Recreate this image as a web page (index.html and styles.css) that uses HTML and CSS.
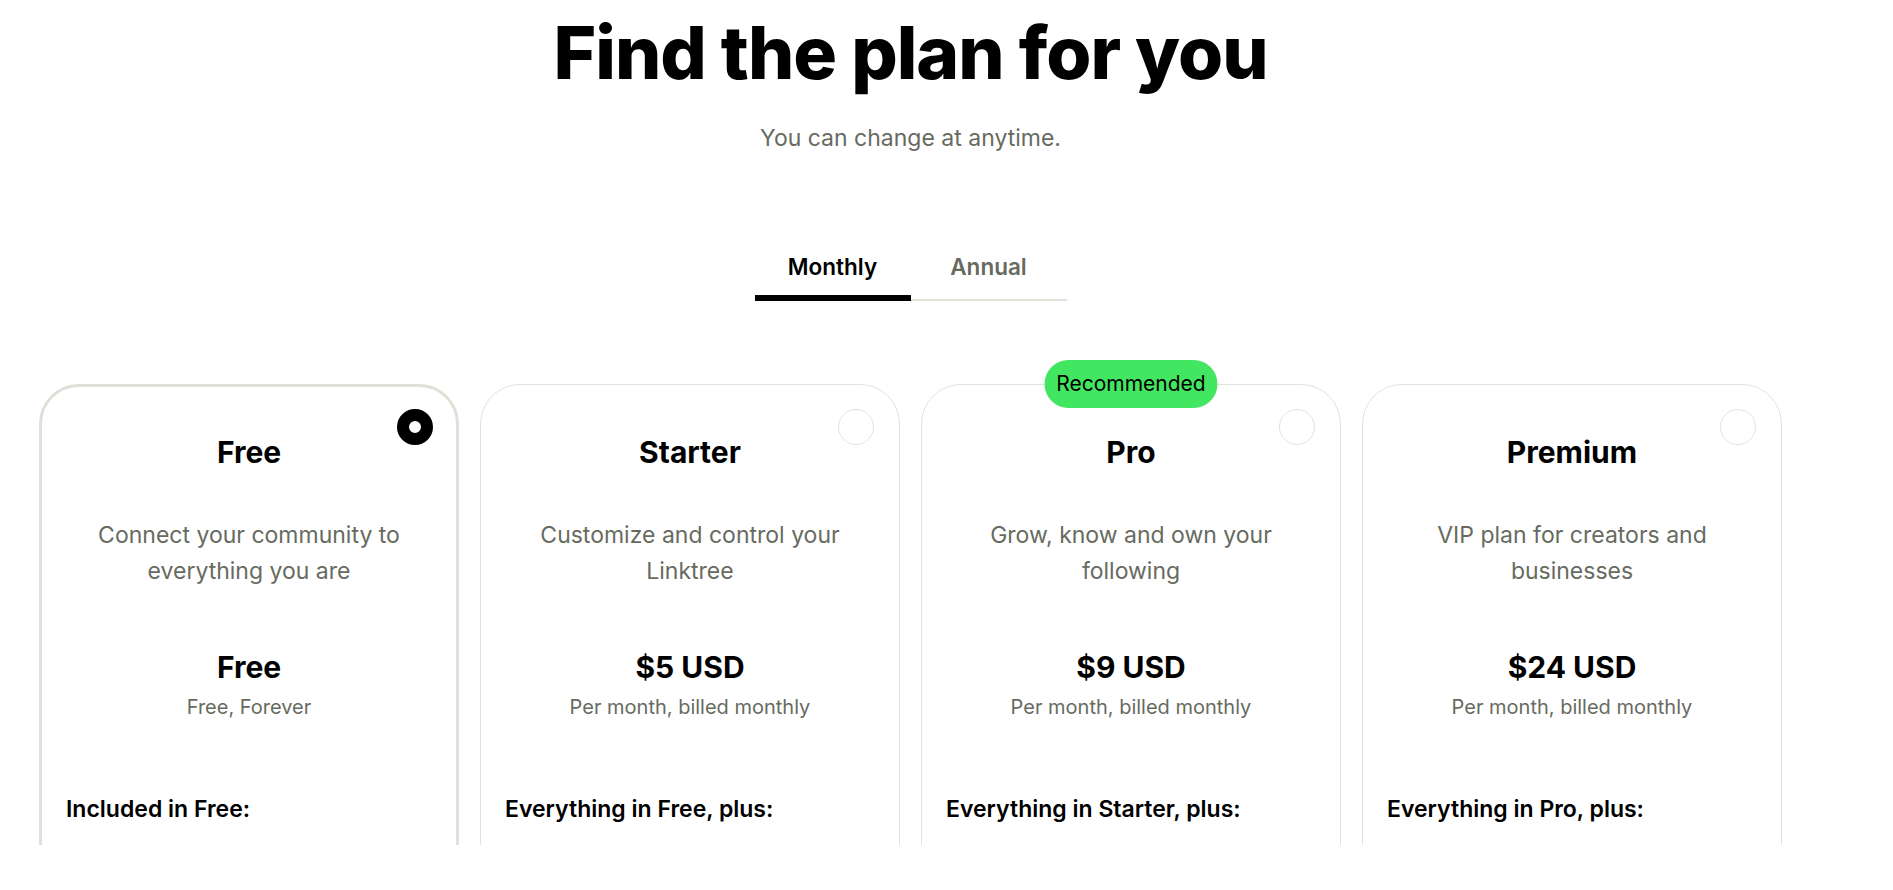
FILE: index.html
```html
<!DOCTYPE html>
<html lang="en">
<head>
<meta charset="utf-8">
<title>Find the plan for you</title>
<link rel="stylesheet" href="styles.css">
</head>
<body>
<main class="page">
  <header class="hero">
    <h1 class="hero-title">Find the plan for you</h1>
    <p class="hero-sub">You can change at anytime.</p>
  </header>

  <nav class="tabs">
    <button class="tab tab-active">Monthly</button>
    <button class="tab">Annual</button>
  </nav>

  <section class="plans">
    <article class="plan plan-selected">
      <span class="radio radio-on"></span>
      <h2 class="plan-name">Free</h2>
      <p class="plan-desc">Connect your community to everything you are</p>
      <div class="plan-price">Free</div>
      <div class="plan-billing">Free, Forever</div>
      <h3 class="plan-includes">Included in Free:</h3>
    </article>

    <article class="plan">
      <span class="radio"></span>
      <h2 class="plan-name">Starter</h2>
      <p class="plan-desc">Customize and control your Linktree</p>
      <div class="plan-price">$5 USD</div>
      <div class="plan-billing">Per month, billed monthly</div>
      <h3 class="plan-includes">Everything in Free, plus:</h3>
    </article>

    <article class="plan">
      <span class="badge">Recommended</span>
      <span class="radio"></span>
      <h2 class="plan-name">Pro</h2>
      <p class="plan-desc">Grow, know and own your following</p>
      <div class="plan-price">$9 USD</div>
      <div class="plan-billing">Per month, billed monthly</div>
      <h3 class="plan-includes">Everything in Starter, plus:</h3>
    </article>

    <article class="plan">
      <span class="radio"></span>
      <h2 class="plan-name">Premium</h2>
      <p class="plan-desc">VIP plan for creators and businesses</p>
      <div class="plan-price">$24 USD</div>
      <div class="plan-billing">Per month, billed monthly</div>
      <h3 class="plan-includes">Everything in Pro, plus:</h3>
    </article>
  </section>
</main>
</body>
</html>
```

FILE: styles.css
```css
* { box-sizing: border-box; }

html, body {
  margin: 0;
  padding: 0;
  background: #ffffff;
}

body {
  font-family: Inter, "Noto Sans", "Liberation Sans", sans-serif;
  color: #000000;
  overflow: hidden;
  height: 890px;
}

.page {
  width: 1821px;
  display: flex;
  flex-direction: column;
  align-items: center;
}

.hero {
  display: flex;
  flex-direction: column;
  align-items: center;
  padding-top: 16px;
}

.hero-title {
  margin: 0;
  font-size: 73px;
  line-height: 73px;
  font-weight: 800;
  letter-spacing: -1px;
}

.hero-sub {
  margin: 33.5px 0 0;
  font-size: 23px;
  line-height: 30px;
  color: #676b5f;
}

.tabs {
  margin-top: 88px;
  display: flex;
}

.tab {
  width: 156px;
  padding: 12px 0 18px;
  border: 0;
  border-bottom: 2px solid #e0e2d9;
  background: transparent;
  font-family: inherit;
  font-size: 22.5px;
  line-height: 28px;
  font-weight: 600;
  color: #676b5f;
  cursor: pointer;
}

.tab-active {
  color: #000000;
  border-bottom: 6px solid #000000;
  padding-bottom: 14px;
}

.plans {
  margin-top: 58px;
  padding: 25px 0 0 39px;
  display: flex;
  gap: 21px;
  height: 486px;
  overflow: hidden;
  align-self: stretch;
}

.plan {
  position: relative;
  flex: 0 0 420px;
  height: 600px;
  border: 1.5px solid #e2e2dc;
  border-radius: 40px;
  padding: 49px 24px 0;
  display: flex;
  flex-direction: column;
  align-items: center;
  text-align: center;
}

.plan-selected {
  border: 3px solid #e0e0d8;
  padding-top: 47px;
}

.radio {
  position: absolute;
  top: 24px;
  right: 25px;
  width: 36px;
  height: 36px;
  border-radius: 50%;
  border: 1.5px solid #e2e2dc;
}

.plan-selected .radio {
  top: 22px;
  right: 23px;
}

.radio-on {
  border: 12px solid #000000;
  background: #ffffff;
}

.badge {
  position: absolute;
  top: -25px;
  left: 50%;
  transform: translateX(-50%);
  width: 173px;
  height: 48px;
  border-radius: 24px;
  background: #43e660;
  color: #000000;
  font-size: 21px;
  line-height: 48px;
  text-align: center;
}

.plan-name {
  margin: 0;
  font-size: 30px;
  line-height: 36px;
  font-weight: 700;
}

.plan-desc {
  margin: 47.5px 0 0;
  width: 320px;
  font-size: 23px;
  line-height: 36px;
  color: #676b5f;
}

.plan-price {
  margin-top: 59.5px;
  font-size: 30px;
  line-height: 36px;
  font-weight: 700;
}

.plan-billing {
  margin-top: 8.5px;
  font-size: 20px;
  line-height: 28px;
  color: #676b5f;
}

.plan-includes {
  margin: 73px 0 0;
  align-self: stretch;
  text-align: left;
  font-size: 23px;
  line-height: 30px;
  font-weight: 600;
}
```
